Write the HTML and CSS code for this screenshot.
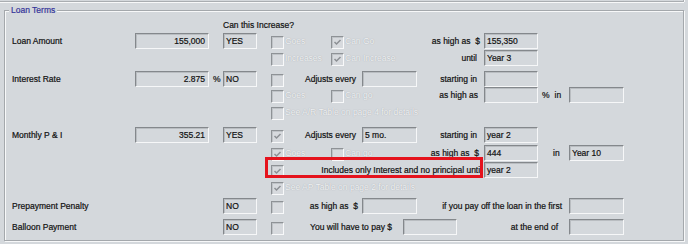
FILE: index.html
```html
<!DOCTYPE html>
<html>
<head>
<meta charset="utf-8">
<link rel="stylesheet" href="styles.css">
</head>
<body>
<div class="topbar"></div>
<div class="group">
  <span class="legend">Loan Terms</span>

  <div class="row">
    <span class="s4-11">Can this Increase?</span>
  </div>

  <div class="row">
    <span class="c1">Loan Amount</span>
    <span class="c2 box num">155,000</span>
    <span class="c4 box">YES</span>
    <span class="s6-8 opt"><i class="cb"></i><span class="dis">Goes</span></span>
    <span class="s8-10 opt"><i class="cb"><svg viewBox="0 0 11 11"><polyline points="2.5,5 4.5,7 8.5,3"/></svg></i><span class="dis">Can Go</span></span>
    <span class="c10 ra">as high as&nbsp; $</span>
    <span class="c11 box">155,350</span>
  </div>

  <div class="row m1">
    <span class="s6-8 opt"><i class="cb"></i><span class="dis">Increases</span></span>
    <span class="s8-10 opt"><i class="cb"><svg viewBox="0 0 11 11"><polyline points="2.5,5 4.5,7 8.5,3"/></svg></i><span class="dis">Can Increase</span></span>
    <span class="c10 ra p7">until</span>
    <span class="c11 box">Year 3</span>
  </div>

  <div class="row m5">
    <span class="c1">Interest Rate</span>
    <span class="c2 box num">2.875</span>
    <span class="c3 unit">%</span>
    <span class="c4 box">NO</span>
    <span class="c6 cbcell"><i class="cb"></i></span>
    <span class="s7-9 adj">Adjusts every</span>
    <span class="c9 box"></span>
    <span class="c10 ra p7">starting in</span>
    <span class="c11 box"></span>
  </div>

  <div class="row">
    <span class="s6-8 opt"><i class="cb"></i><span class="dis">Goes</span></span>
    <span class="s8-10 opt"><i class="cb"></i><span class="dis">Can go</span></span>
    <span class="c10 ra p6">as high as</span>
    <span class="c11 box"></span>
    <span class="c12 pct"><span>%</span><span class="in">in</span></span>
    <span class="c13 box"></span>
  </div>

  <div class="row m1">
    <span class="s6-11 opt"><i class="cb"></i><span class="dis">See A/R Table on page 4 for details</span></span>
  </div>

  <div class="row m7">
    <span class="c1">Monthly P &amp; I</span>
    <span class="c2 box num">355.21</span>
    <span class="c4 box">YES</span>
    <span class="c6 cbcell"><i class="cb"><svg viewBox="0 0 11 11"><polyline points="2.5,5 4.5,7 8.5,3"/></svg></i></span>
    <span class="s7-9 adj">Adjusts every</span>
    <span class="c9 box">5 mo.</span>
    <span class="c10 ra p7">starting in</span>
    <span class="c11 box">year 2</span>
  </div>

  <div class="row m2">
    <span class="s6-8 opt"><i class="cb"><svg viewBox="0 0 11 11"><polyline points="2.5,5 4.5,7 8.5,3"/></svg></i><span class="dis">Goes</span></span>
    <span class="s8-10 opt"><i class="cb"></i><span class="dis">Can go</span></span>
    <span class="c10 ra p5">as high as&nbsp; $</span>
    <span class="c11 box">444</span>
    <span class="c12 in2">in</span>
    <span class="c13 box">Year 10</span>
  </div>

  <div class="row m1">
    <span class="c6 cbcell"><i class="cb"><svg viewBox="0 0 11 11"><polyline points="2.5,5 4.5,7 8.5,3"/></svg></i></span>
    <span class="s7-11 ra p2">Includes only Interest and no principal until</span>
    <span class="c11 box">year 2</span>
    <span class="s5-11 mark"></span>
  </div>

  <div class="row m1">
    <span class="s6-11 opt"><i class="cb"><svg viewBox="0 0 11 11"><polyline points="2.5,5 4.5,7 8.5,3"/></svg></i><span class="dis">See AP Table on page 2 for details</span></span>
  </div>

  <div class="row m3">
    <span class="c1">Prepayment Penalty</span>
    <span class="c4 box">NO</span>
    <span class="c6 cbcell"><i class="cb"></i></span>
    <span class="s7-9 ra">as high as&nbsp; $</span>
    <span class="c9 box"></span>
    <span class="s10-13 ra p7">if you pay off the loan in the first</span>
    <span class="c13 box"></span>
  </div>

  <div class="row m5">
    <span class="c1">Balloon Payment</span>
    <span class="c4 box">NO</span>
    <span class="c6 cbcell"><i class="cb"></i></span>
    <span class="s7-13 pay">
      <span class="paylbl">You will have to pay $</span>
      <span class="box paybox"></span>
      <span class="endlbl">at the end of</span>
    </span>
    <span class="c13 box"></span>
  </div>
</div>
</body>
</html>
```

FILE: styles.css
```css
html, body {
  margin: 0;
  padding: 0;
}

body {
  width: 688px;
  height: 244px;
  overflow: hidden;
  background: #d4d8dc;
  font-family: "Liberation Sans", Arial, sans-serif;
  font-size: 8.5px;
  color: #111;
  -webkit-text-stroke: 0.2px currentColor;
}

.topbar {
  width: 683px;
  height: 1px;
  border-bottom: 1px solid #a9adb1;
  border-right: 1px solid #a9adb1;
  box-shadow: 0 1px 0 #f7f8f9, 1px 0 0 #f7f8f9;
}

.group {
  position: relative;
  margin: 8px 0 0 4px;
  width: 680px;
  height: 231px;
  box-sizing: border-box;
  border: 1px solid #a4a8ac;
  box-shadow: inset 1px 1px 0 #f7f8f9, 1px 1px 0 #f7f8f9;
  padding: 6px 0 0 7px;
}

.legend {
  position: absolute;
  left: 4px;
  top: -7px;
  line-height: 12px;
  padding: 0 2px;
  background: #d4d8dc;
  color: #34349a;
}

.row {
  display: grid;
  grid-template-columns: 123px 74px 14px 34px 14px 13px 47px 31px 55px 67px 54px 31px 55px;
  grid-template-rows: 16px;
  height: 16px;
  align-items: center;
  white-space: nowrap;
}

.row > * {
  grid-row: 1;
}

.m1 { margin-top: 1px; }
.m2 { margin-top: 2px; }
.m3 { margin-top: 3px; }
.m5 { margin-top: 5px; }
.m7 { margin-top: 7px; }

.c1 { grid-column: 1; }
.c2 { grid-column: 2; }
.c3 { grid-column: 3; }
.c4 { grid-column: 4; }
.c6 { grid-column: 6; }
.c9 { grid-column: 9; }
.c10 { grid-column: 10; }
.c11 { grid-column: 11; }
.c12 { grid-column: 12; }
.c13 { grid-column: 13; }
.s4-11 { grid-column: 4 / 11; }
.s5-11 { grid-column: 5 / 11; }
.s6-8 { grid-column: 6 / 8; }
.s6-11 { grid-column: 6 / 11; }
.s7-9 { grid-column: 7 / 9; }
.s7-11 { grid-column: 7 / 11; }
.s7-13 { grid-column: 7 / 13; }
.s8-10 { grid-column: 8 / 10; }
.s10-13 { grid-column: 10 / 13; }

.box {
  height: 16px;
  box-sizing: border-box;
  display: flex;
  align-items: center;
  padding: 0 2px;
  overflow: hidden;
  border-style: solid;
  border-width: 1px;
  border-color: #84888c #f6f7f8 #f6f7f8 #84888c;
  box-shadow: inset 1px 1px 0 #b9bdc1;
  background: #d4d8dc;
}

.num {
  justify-content: flex-end;
  padding-right: 3px;
}

.unit {
  padding-left: 4px;
}

.opt {
  display: flex;
  align-items: center;
  gap: 1px;
}

.cbcell {
  display: flex;
  align-items: center;
}

.cb {
  display: block;
  width: 13px;
  height: 13px;
  flex: none;
  box-sizing: border-box;
  margin-top: 2px;
  border-style: solid;
  border-width: 1px;
  border-color: #8e9296 #f8f9fa #f8f9fa #8e9296;
  box-shadow: inset 1px 1px 0 #bfc3c7;
  background: #d7dade;
}

.cb svg {
  display: block;
  width: 11px;
  height: 11px;
}

.cb polyline {
  fill: none;
  stroke: #8c9094;
  stroke-width: 1.5;
}

.dis {
  color: #f0f2f4;
  -webkit-text-stroke: 0;
  text-shadow: 0 0 1px #979ba0;
}

.ra {
  text-align: right;
  padding-right: 4px;
}

.p2 { padding-right: 2px; }
.p5 { padding-right: 5px; }
.p6 { padding-right: 6px; }
.p7 { padding-right: 7px; }

.adj {
  padding-left: 21px;
}

.pct {
  padding-left: 4px;
}

.pct .in {
  margin-left: 5px;
}

.in2 {
  padding-left: 15px;
}

.pay {
  display: flex;
  align-items: center;
}

.paylbl {
  width: 115px;
  box-sizing: border-box;
  text-align: right;
  padding-right: 7px;
  flex: none;
}

.paybox {
  width: 54px;
  margin-left: 4px;
  flex: none;
}

.endlbl {
  flex: 1;
  text-align: right;
  padding-right: 11px;
}

.mark {
  align-self: start;
  margin: -5px 1px 0 8px;
  height: 21px;
  box-sizing: border-box;
  border: 3px solid #e5131d;
  z-index: 2;
}
```
